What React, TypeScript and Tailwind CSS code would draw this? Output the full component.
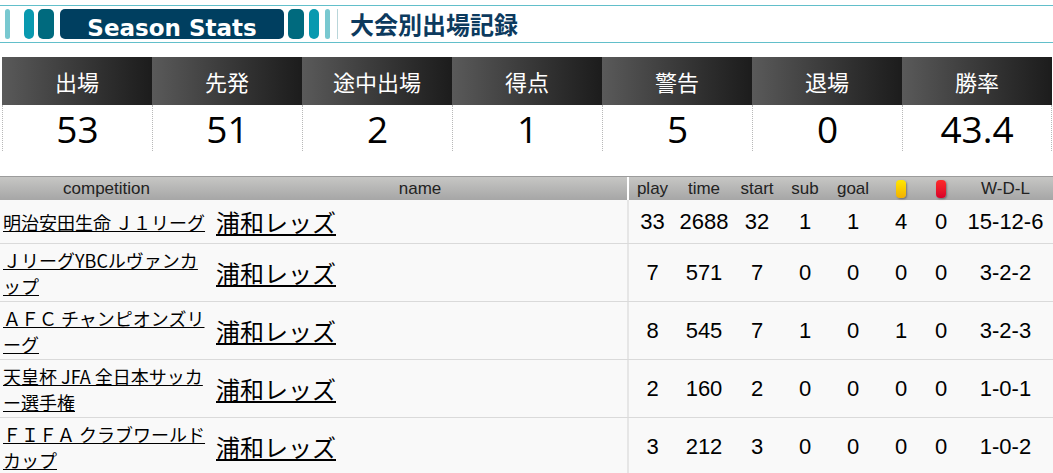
const jp = "[font-family:'Noto_Sans_CJK_JP',sans-serif]";

const stats: [string, string][] = [
  ["出場", "53"],
  ["先発", "51"],
  ["途中出場", "2"],
  ["得点", "1"],
  ["警告", "5"],
  ["退場", "0"],
  ["勝率", "43.4"],
];

const rows: { c: string[]; v: string[] }[] = [
  { c: ["明治安田生命 Ｊ１リーグ"], v: ["33", "2688", "32", "1", "1", "4", "0", "15-12-6"] },
  { c: ["ＪリーグYBCルヴァンカ", "ップ"], v: ["7", "571", "7", "0", "0", "0", "0", "3-2-2"] },
  { c: ["ＡＦＣ チャンピオンズリ", "ーグ"], v: ["8", "545", "7", "1", "0", "1", "0", "3-2-3"] },
  { c: ["天皇杯 JFA 全日本サッカ", "ー選手権"], v: ["2", "160", "2", "0", "0", "0", "0", "1-0-1"] },
  { c: ["ＦＩＦＡ クラブワールド", "カップ"], v: ["3", "212", "3", "0", "0", "0", "0", "1-0-2"] },
];

const grid = "grid grid-cols-[213px_414px_49px_56px_50px_46px_50px_46px_34px_95px]";

function Card({ color }: { color: "y" | "r" }) {
  return (
    <div
      className={
        color === "y"
          ? "w-[10px] h-[18px] rounded-[4px] bg-linear-to-b from-[#ffe800] to-[#f2b000] shadow-[1px_1px_2px_rgba(0,0,0,0.35)]"
          : "w-[10px] h-[18px] rounded-[4px] bg-linear-to-b from-[#ff2a2a] to-[#d8002a] shadow-[1px_1px_2px_rgba(0,0,0,0.35)]"
      }
    />
  );
}

export default function App() {
  return (
    <div className="w-[1053px] h-[473px] bg-white overflow-hidden">
      {/* Title */}
      <div className="mt-[5px] h-[38px] border-t border-b border-[#62bfca] pt-[3px]">
        <div className="flex items-start h-[30px]">
          <div className="ml-[5px] w-[5px] h-[30px] rounded-full bg-[#78c8d0]" />
          <div className="ml-[14px] w-[10px] h-[30px] rounded-[5px] bg-[#0899af]" />
          <div className="ml-[4px] w-[16px] h-[30px] rounded-[5px] bg-[#006a7e]" />
          <div className="ml-[6px] w-[224px] h-[30px] rounded-[5px] bg-[#003f60] flex items-center justify-center">
            <span className="[font-family:'DejaVu_Sans',sans-serif] font-bold text-[23px] leading-none text-white pt-[8px]">
              Season Stats
            </span>
          </div>
          <div className="ml-[4px] w-[16px] h-[30px] rounded-[5px] bg-[#006a7e]" />
          <div className="ml-[5px] w-[10px] h-[30px] rounded-[5px] bg-[#0899af]" />
          <div className="ml-[6px] w-[5px] h-[30px] rounded-full bg-[#78c8d0]" />
          <div className="ml-[7px] w-[1px] h-[30px] bg-[#b9d6da]" />
          <div className={`ml-[12px] h-[30px] flex items-center ${jp} font-bold text-[24px] leading-none text-[#0c3a5e]`}>
            大会別出場記録
          </div>
        </div>
      </div>

      {/* Stats summary */}
      <div className="mt-[14px] ml-[2px] w-[1050px] grid grid-cols-7">
        {stats.map(([label, val], i) => (
          <div key={i} className="flex flex-col">
            <div className={`h-[48px] flex items-center justify-center bg-linear-to-r from-[#5a5a5a] to-[#1c1c1c] text-white ${jp} text-[22px]`}>
              {label}
            </div>
            <div
              className={`h-[46px] flex items-center justify-center border-l border-dotted border-[#b8b8b8] ${
                i === 6 ? "border-r" : ""
              } [font-family:'Open_Sans',sans-serif] text-[37px] text-black leading-none`}
            >
              {val}
            </div>
          </div>
        ))}
      </div>

      {/* Table */}
      <div className="mt-[25px]">
        <div
          className={`${grid} h-[24px] bg-linear-to-b from-[#c6c6c4] to-[#a6a6a6] border-t border-[#9c9c9c] [font-family:'Liberation_Sans',sans-serif] text-[17px] text-[#222] leading-none`}
        >
          <div className="flex items-center justify-center">competition</div>
          <div className="flex items-center justify-center">name</div>
          <div className="flex items-center justify-center border-l-2 border-white">play</div>
          <div className="flex items-center justify-center">time</div>
          <div className="flex items-center justify-center">start</div>
          <div className="flex items-center justify-center">sub</div>
          <div className="flex items-center justify-center">goal</div>
          <div className="flex items-center justify-center">
            <Card color="y" />
          </div>
          <div className="flex items-center justify-center">
            <Card color="r" />
          </div>
          <div className="flex items-center justify-center">W-D-L</div>
        </div>
        {rows.map((r, i) => (
          <div
            key={i}
            className={`${grid} ${i === 0 ? "h-[44px]" : "h-[58px]"} bg-[#f9f9f9] border-b border-[#dadada]`}
          >
            <div className={`flex items-center pl-[3px] ${jp} text-[18px] leading-[26px] whitespace-nowrap`}>
              <a className="underline text-black cursor-pointer">
                {r.c.map((line, k) => (
                  <span key={k}>
                    {k > 0 && <br />}
                    {line}
                  </span>
                ))}
              </a>
            </div>
            <div className={`flex items-center pl-[3px] ${jp} text-[24px] leading-[34px]`}>
              <a className="underline text-black cursor-pointer">浦和レッズ</a>
            </div>
            {r.v.map((v, j) => (
              <div
                key={j}
                className={`flex items-center justify-center [font-family:'Liberation_Sans',sans-serif] text-[22px] text-black ${
                  j === 0 ? "border-l-2 border-[#e6e6e6]" : ""
                }`}
              >
                {v}
              </div>
            ))}
          </div>
        ))}
      </div>
    </div>
  );
}
